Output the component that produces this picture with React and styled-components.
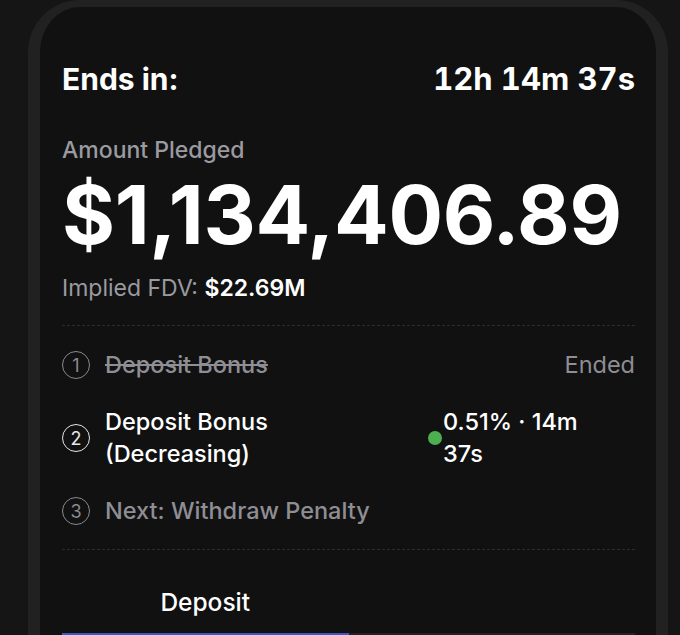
import React from 'react';
import styled, { createGlobalStyle } from 'styled-components';

const GlobalStyle = createGlobalStyle`
	html, body {
		margin: 0;
		background: #151515;
		font-family: Inter, 'Noto Sans', sans-serif;
		color: #fff;
	}
`;

const Page = styled.div`
	padding: 0 12px 0 28px;
	height: 635px;
	overflow: hidden;
`;

const Card = styled.div`
	background: #111111;
	border: 12px solid #212121;
	border-top-width: 7px;
	border-bottom: none;
	border-radius: 52px 52px 0 0;
	padding: 54px 21px 0 22px;
	min-height: 700px;
`;

const Header = styled.div`
	display: flex;
	justify-content: space-between;
	align-items: baseline;
	font-size: 30px;
	line-height: 36px;
	font-weight: 700;
	margin-bottom: 39px;
`;

const Timer = styled.span`
	font-size: 31px;
	font-variant-numeric: tabular-nums;
`;

const Label = styled.div`
	font-size: 23px;
	line-height: 28px;
	font-weight: 500;
	color: #9a9aa0;
`;

const Amount = styled.div`
	font-size: 81px;
	line-height: 80px;
	font-weight: 700;
	letter-spacing: -0.3px;
	margin-top: 11px;
`;

const Fdv = styled.div`
	font-size: 23px;
	line-height: 28px;
	color: #9a9aa0;
	margin-top: 19px;

	strong {
		color: #fff;
		font-weight: 600;
	}
`;

const Divider = styled.div`
	border-top: 1px dashed #2c2c2c;
	margin-top: ${(p) => p.top}px;
`;

const Steps = styled.div`
	display: flex;
	flex-direction: column;
	gap: 25px;
	padding: 23px 0 22px;
`;

const Step = styled.div`
	display: flex;
	align-items: center;
	gap: 15px;
`;

const Circle = styled.span`
	flex: none;
	width: 26px;
	height: 26px;
	border-radius: 50%;
	border: 1.5px solid ${(p) => (p.active ? '#e6e6e6' : '#8a8a90')};
	color: ${(p) => (p.active ? '#e6e6e6' : '#8a8a90')};
	display: flex;
	align-items: center;
	justify-content: center;
	font-size: 18px;
	font-weight: 400;
`;

const StepName = styled.div`
	flex: 1;
	font-size: 23.5px;
	line-height: 32px;
	font-weight: 500;
	color: ${(p) => (p.active ? '#ffffff' : '#8e8e94')};
	text-decoration: ${(p) => (p.done ? 'line-through' : 'none')};
`;

const Status = styled.div`
	font-size: 23.5px;
	line-height: 32px;
	color: #8e8e94;
`;

const Live = styled.div`
	width: 207px;
	display: flex;
	align-items: center;
	gap: 1px;
	font-size: 23.5px;
	line-height: 32px;
	font-weight: 500;
	color: #fff;

	span {
		width: 160px;
	}
`;

const Dot = styled.i`
	flex: none;
	width: 14px;
	height: 14px;
	border-radius: 50%;
	background: #4caf50;
`;

const Tabs = styled.div`
	display: flex;
`;

const Tab = styled.div`
	flex: 1;
	text-align: center;
	padding: 38px 0 17px;
	font-size: 24.5px;
	line-height: 28px;
	font-weight: 500;
	color: #fff;
	border-bottom: 3px solid ${(p) => (p.selected ? '#3d56c4' : '#222222')};
`;

const App = () => (
	<>
		<GlobalStyle />
		<Page>
			<Card>
				<Header>
					<span>Ends in:</span>
					<Timer>12h 14m 37s</Timer>
				</Header>
				<Label>Amount Pledged</Label>
				<Amount>$1,134,406.89</Amount>
				<Fdv>
					Implied FDV: <strong>$22.69M</strong>
				</Fdv>
				<Divider top={23} />
				<Steps>
					<Step>
						<Circle>1</Circle>
						<StepName done>Deposit Bonus</StepName>
						<Status>Ended</Status>
					</Step>
					<Step>
						<Circle active>2</Circle>
						<StepName active>
							Deposit Bonus
							<br />
							(Decreasing)
						</StepName>
						<Live>
							<Dot />
							<span>0.51% · 14m 37s</span>
						</Live>
					</Step>
					<Step>
						<Circle>3</Circle>
						<StepName>Next: Withdraw Penalty</StepName>
					</Step>
				</Steps>
				<Divider top={0} />
				<Tabs>
					<Tab selected>Deposit</Tab>
					<Tab />
				</Tabs>
			</Card>
		</Page>
	</>
);

export default App;
